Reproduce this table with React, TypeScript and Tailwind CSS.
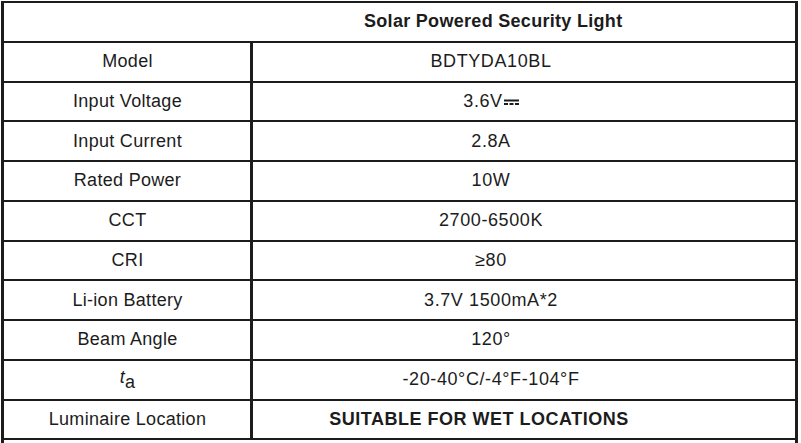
import React from "react";

type Row = { label: React.ReactNode; value: React.ReactNode; cls?: string };

const rows: Row[] = [
  { label: "Model", value: "BDTYDA10BL" },
  {
    label: "Input Voltage",
    value: (
      <span className="inline-flex items-center">
        3.6V
        <svg width="15" height="8" viewBox="0 0 15 8" className="ml-[1px] mt-[3px]">
          <rect x="0" y="0.5" width="15" height="2" fill="#1c1c1c" />
          <rect x="0" y="4" width="4" height="2" fill="#1c1c1c" />
          <rect x="5.5" y="4" width="4" height="2" fill="#1c1c1c" />
          <rect x="11" y="4" width="4" height="2" fill="#1c1c1c" />
        </svg>
      </span>
    ),
  },
  { label: "Input Current", value: "2.8A" },
  { label: "Rated Power", value: "10W" },
  { label: "CCT", value: "2700-6500K" },
  { label: "CRI", value: "≥80" },
  { label: "Li-ion Battery", value: "3.7V 1500mA*2" },
  { label: "Beam Angle", value: "120°" },
  {
    label: (
      <span>
        <i>t</i>
        <span className="align-[-5px]">a</span>
      </span>
    ),
    value: "-20-40°C/-4°F-104°F",
  },
  {
    label: "Luminaire Location",
    value: "SUITABLE FOR WET LOCATIONS",
    cls: "font-bold tracking-[0.5px] pr-[90px]",
  },
];

export default function App() {
  return (
    <div
      className="w-[801px] h-[443px] overflow-hidden bg-white pt-[1px] pl-[1px] text-[#1c1c1c]"
      style={{ fontFamily: '"Liberation Sans", Arial, sans-serif' }}
    >
      <div className="w-[797px] border-t-2 border-l-[3px] border-r-[3px] border-[#1c1c1c]">
        <div className="h-[39.75px] border-b-2 border-[#1c1c1c] flex items-center pl-[360px] text-[18px] font-bold tracking-[0.3px]">
          Solar Powered Security Light
        </div>
        {rows.map((r, i) => (
          <div key={i} className="h-[39.75px] border-b-2 border-[#1c1c1c] flex text-[18px]">
            <div className="w-[249px] border-r-[3px] border-[#1c1c1c] flex items-center justify-center pl-[1px] tracking-[0.3px]">
              {r.label}
            </div>
            <div
              className={
                "flex-1 flex items-center justify-center " +
                (r.cls ? r.cls : "tracking-[0.6px] pr-[66px]")
              }
            >
              {r.value}
            </div>
          </div>
        ))}
        <div className="h-[40px]"></div>
      </div>
    </div>
  );
}
